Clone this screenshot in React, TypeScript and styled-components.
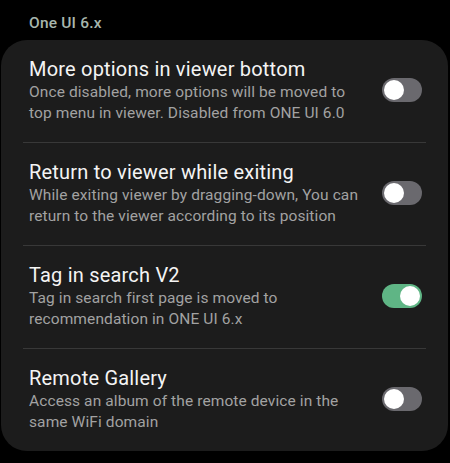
import React from "react";
import styled, { createGlobalStyle } from "styled-components";

const GlobalStyle = createGlobalStyle`
  html, body {
    margin: 0;
    padding: 0;
    background: #000000;
  }
  body {
    font-family: Roboto, "Noto Sans", sans-serif;
    -webkit-font-smoothing: antialiased;
  }
`;

const Page = styled.div`
  width: 450px;
  height: 463px;
  background: #000000;
  padding: 13px 2px 0 1px;
  box-sizing: border-box;
`;

const SectionLabel = styled.div`
  font-size: 15.5px;
  font-weight: 500;
  color: #a7b6ad;
  padding-left: 28px;
  line-height: 21px;
  margin-bottom: 6px;
  letter-spacing: 0.2px;
`;

const Card = styled.section`
  background: #1c1c1c;
  border-radius: 26px;
  padding: 0 22px;
`;

const Row = styled.div<{ $last?: boolean }>`
  display: flex;
  align-items: center;
  gap: 16px;
  padding: 16px 4px 18px 6px;
  border-bottom: ${(p) => (p.$last ? "none" : "1px solid #383838")};
`;

const Texts = styled.div`
  flex: 1;
  min-width: 0;
`;

const Title = styled.div`
  font-size: 20px;
  line-height: 26px;
  color: #f4f4f4;
  letter-spacing: 0.2px;
`;

const Description = styled.div`
  font-size: 15.5px;
  line-height: 21px;
  color: #a2a2a2;
  letter-spacing: 0.1px;
`;

const Track = styled.div<{ $on: boolean }>`
  position: relative;
  flex: none;
  width: 40px;
  height: 24px;
  border-radius: 12px;
  background: ${(p) => (p.$on ? "#5fb585" : "#6a696e")};
`;

const Knob = styled.div<{ $on: boolean }>`
  position: absolute;
  top: 2px;
  left: ${(p) => (p.$on ? "18px" : "2px")};
  width: 20px;
  height: 20px;
  border-radius: 50%;
  background: #ffffff;
`;

interface ISetting {
  title: string;
  description: string;
  on: boolean;
}

const settings: ISetting[] = [
  {
    title: "More options in viewer bottom",
    description:
      "Once disabled, more options will be moved to top menu in viewer. Disabled from ONE UI 6.0",
    on: false,
  },
  {
    title: "Return to viewer while exiting",
    description:
      "While exiting viewer by dragging-down, You can return to the viewer according to its position",
    on: false,
  },
  {
    title: "Tag in search V2",
    description: "Tag in search first page is moved to recommendation in ONE UI 6.x",
    on: true,
  },
  {
    title: "Remote Gallery",
    description: "Access an album of the remote device in the same WiFi domain",
    on: false,
  },
];

const Toggle = ({ on }: { on: boolean }) => (
  <Track $on={on}>
    <Knob $on={on} />
  </Track>
);

const App = () => {
  return (
    <>
      <GlobalStyle />
      <Page>
        <SectionLabel>One UI 6.x</SectionLabel>
        <Card>
          {settings.map((s, i) => (
            <Row key={s.title} $last={i === settings.length - 1}>
              <Texts>
                <Title>{s.title}</Title>
                <Description>{s.description}</Description>
              </Texts>
              <Toggle on={s.on} />
            </Row>
          ))}
        </Card>
      </Page>
    </>
  );
};

export default App;
